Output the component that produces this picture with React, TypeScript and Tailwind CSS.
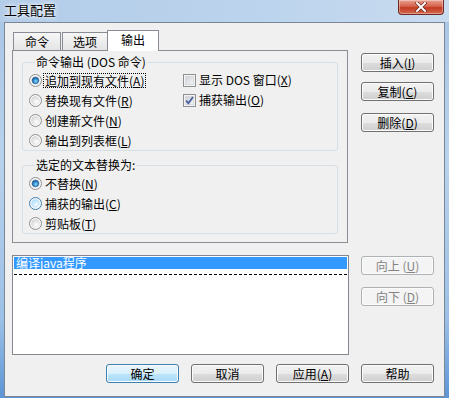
import React from "react"

type RadioState = "on" | "off" | "hover"

function Radio({ state }: { state: RadioState }) {
  const ring = state === "hover" ? "#3c7fb1" : "#8e8f8f"
  return (
    <svg width="13" height="13" viewBox="0 0 13 13" className="shrink-0">
      <defs>
        <radialGradient id="rb-off" cx="0.6" cy="0.65" r="0.7">
          <stop offset="0" stopColor="#ffffff" />
          <stop offset="1" stopColor="#d2d2d2" />
        </radialGradient>
        <radialGradient id="rb-hover" cx="0.6" cy="0.65" r="0.7">
          <stop offset="0" stopColor="#f1f9fe" />
          <stop offset="1" stopColor="#a9dcf9" />
        </radialGradient>
        <radialGradient id="rb-dot" cx="0.55" cy="0.6" r="0.6">
          <stop offset="0" stopColor="#8fdcfc" />
          <stop offset="0.6" stopColor="#2b86c9" />
          <stop offset="1" stopColor="#15508f" />
        </radialGradient>
      </defs>
      <circle cx="6.5" cy="6.5" r="6" fill="#f7f7f7" stroke={ring} />
      <circle cx="6.5" cy="6.5" r="4.3" fill={state === "hover" ? "url(#rb-hover)" : "url(#rb-off)"} />
      {state === "on" && <circle cx="6.5" cy="6.5" r="3.3" fill="url(#rb-dot)" stroke="#1d5e98" strokeWidth="0.6" />}
    </svg>
  )
}

function Check({ checked }: { checked?: boolean }) {
  return (
    <svg width="13" height="13" viewBox="0 0 13 13" className="shrink-0">
      <defs>
        <linearGradient id="cb-in" x1="0" y1="0" x2="1" y2="1">
          <stop offset="0" stopColor="#cbcfd5" />
          <stop offset="1" stopColor="#f7f7f7" />
        </linearGradient>
      </defs>
      <rect x="0.5" y="0.5" width="12" height="12" fill="#f4f4f4" stroke="#8e8f8f" />
      <rect x="2.5" y="2.5" width="8" height="8" fill="url(#cb-in)" stroke="#d6d9dd" />
      {checked && <path d="M3.2 6.6 L5.4 9.2 L10 3" fill="none" stroke="#4a5f9c" strokeWidth="1.8" />}
    </svg>
  )
}

// label with underlined access key, e.g. 插入(I)
function Acc({ t, k }: { t: string; k?: string }) {
  if (!k) return <>{t}</>
  return (
    <>
      {t}(<u className="underline-offset-1">{k}</u>)
    </>
  )
}

type BtnKind = "normal" | "default" | "disabled"

function Btn({ t, k, kind = "normal", className = "" }: { t: string; k?: string; kind?: BtnKind; className?: string }) {
  const look =
    kind === "default"
      ? "border-[#3c7fb1] bg-[linear-gradient(#eaf6fd_0%,#d9f0fc_50%,#bee6fd_51%,#a7d9f5_100%)] text-black"
      : kind === "disabled"
        ? "border-[#adb2b5] bg-[#f4f4f4] text-[#838383]"
        : "border-[#707070] bg-[linear-gradient(#f2f2f2_0%,#ebebeb_50%,#dddddd_51%,#cfcfcf_100%)] text-black"
  return (
    <div
      className={`flex h-[19px] w-[73px] items-center justify-center rounded-[3px] border shadow-[inset_0_0_0_1px_#fbfbfb] text-[12px] leading-[12px] ${look} ${className}`}
    >
      <Acc t={t} k={k} />
    </div>
  )
}

function Opt({ state, t, k, focus }: { state: RadioState; t: string; k: string; focus?: boolean }) {
  return (
    <div className="flex h-[20px] items-center gap-[2px]">
      <Radio state={state} />
      <span className={`px-[1px] leading-[13px] ${focus ? "outline outline-1 outline-dotted outline-black" : ""}`}>
        <Acc t={t} k={k} />
      </span>
    </div>
  )
}

export default function App() {
  return (
    <div className="flex h-[398px] w-[449px] flex-col bg-[linear-gradient(180deg,#a8c5e5_0%,#b9d2ec_40%,#9cc0e6_80%,#5d95d6_100%)] font-['Noto_Sans_CJK_SC',sans-serif] text-[12px] text-black">
      {/* Title bar */}
      <div className="flex h-[22px] shrink-0 items-start justify-between bg-[linear-gradient(90deg,#b3cce8_0%,#bcd4ed_60%,#c9dbef_100%)]">
        <div className="pl-[4px] pt-[2px] text-[13px] leading-[16px] [text-shadow:0_0_6px_#fff,0_0_3px_#fff]">工具配置</div>
        <div className="mr-[5px] flex h-[15px] w-[46px] items-center justify-center rounded-b-[4px] border border-t-0 border-[#6e2a22] bg-[linear-gradient(#e9a08f_0%,#d5624c_45%,#c23a22_55%,#d46a4f_100%)] shadow-[inset_0_0_0_1px_rgba(255,255,255,0.35)]">
          <svg width="12" height="10" viewBox="0 0 12 10">
            <path d="M2 1 L10 9 M10 1 L2 9" stroke="#5a1f17" strokeWidth="3.2" strokeLinecap="square" />
            <path d="M2 1 L10 9 M10 1 L2 9" stroke="#ffffff" strokeWidth="2" strokeLinecap="square" />
          </svg>
        </div>
      </div>

      {/* Client area */}
      <div className="ml-[4px] h-[375px] w-[441px] shrink-0 border border-[#7a8796] bg-[#f0f0f0]">
        <div className="flex">
          {/* Left column: tabs, page, list */}
          <div className="ml-[7px] w-[337px]">
            <div className="mt-[7px] flex h-[20px] items-end pl-[1px]">
              <div className="flex h-[18px] w-[48px] items-center justify-center border border-b-0 border-[#898c95] bg-[linear-gradient(#f7f7f7,#e4e4e4)]">
                命令
              </div>
              <div className="ml-[1px] flex h-[18px] w-[46px] items-center justify-center border border-b-0 border-[#898c95] bg-[linear-gradient(#f7f7f7,#e4e4e4)]">
                选项
              </div>
              <div className="relative z-10 -mb-px -ml-px flex h-[21px] w-[52px] items-start justify-center border border-b-0 border-[#898c95] bg-white pt-[2px] leading-[14px]">
                输出
              </div>
            </div>

            {/* Tab page */}
            <div className="h-[193px] w-[336px] border border-[#898c95] bg-[#f0f0f0]">
              <fieldset className="ml-[9px] mt-[4px] w-[316px] rounded-[3px] border border-[#d5dfe5] pb-0 pl-[6px] pt-[1px]">
                <legend className="ml-[6px] px-[1px] leading-[14px]">命令输出 (DOS 命令)</legend>
                <div className="flex">
                  <div className="w-[154px]">
                    <Opt state="on" t="追加到现有文件" k="A" focus />
                    <Opt state="off" t="替换现有文件" k="R" />
                    <Opt state="off" t="创建新文件" k="N" />
                    <Opt state="off" t="输出到列表框" k="L" />
                  </div>
                  <div>
                    <div className="flex h-[20px] items-center gap-[3px]">
                      <Check />
                      <span>
                        显示 DOS 窗口<Acc t="" k="X" />
                      </span>
                    </div>
                    <div className="flex h-[20px] items-center gap-[3px]">
                      <Check checked />
                      <span>
                        <Acc t="捕获输出" k="O" />
                      </span>
                    </div>
                  </div>
                </div>
              </fieldset>

              <fieldset className="ml-[9px] mt-[7px] w-[316px] rounded-[3px] border border-[#d5dfe5] pl-[6px] pt-[1px]">
                <legend className="ml-[6px] px-[1px] leading-[14px]">选定的文本替换为:</legend>
                <Opt state="on" t="不替换" k="N" />
                <Opt state="hover" t="捕获的输出" k="C" />
                <Opt state="off" t="剪贴板" k="T" />
              </fieldset>
            </div>

            {/* Tool list */}
            <div className="mt-[12px] h-[100px] w-[337px] border border-[#828790] bg-white pl-[1px] pr-[1px] pt-[1px]">
              <div className="h-[12px] bg-[#3399ff] pl-[2px] leading-[12px] text-white">编译java程序</div>
              <div className="mt-[5px] border-t border-dashed border-black" />
            </div>
          </div>

          {/* Right column buttons */}
          <div className="ml-[12px] flex flex-col">
            <Btn t="插入" k="I" className="mt-[30px]" />
            <Btn t="复制" k="C" className="mt-[10px]" />
            <Btn t="删除" k="D" className="mt-[12px]" />
            <Btn t="向上 " k="U" kind="disabled" className="mt-[124px]" />
            <Btn t="向下 " k="D" kind="disabled" className="mt-[12px]" />
          </div>
        </div>

        {/* Bottom buttons */}
        <div className="ml-[101px] mt-[9px] flex">
          <Btn t="确定" kind="default" className="w-[72px]" />
          <Btn t="取消" className="ml-[12px]" />
          <Btn t="应用" k="A" className="ml-[12px]" />
          <Btn t="帮助" className="ml-[12px]" />
        </div>
      </div>
    </div>
  )
}
